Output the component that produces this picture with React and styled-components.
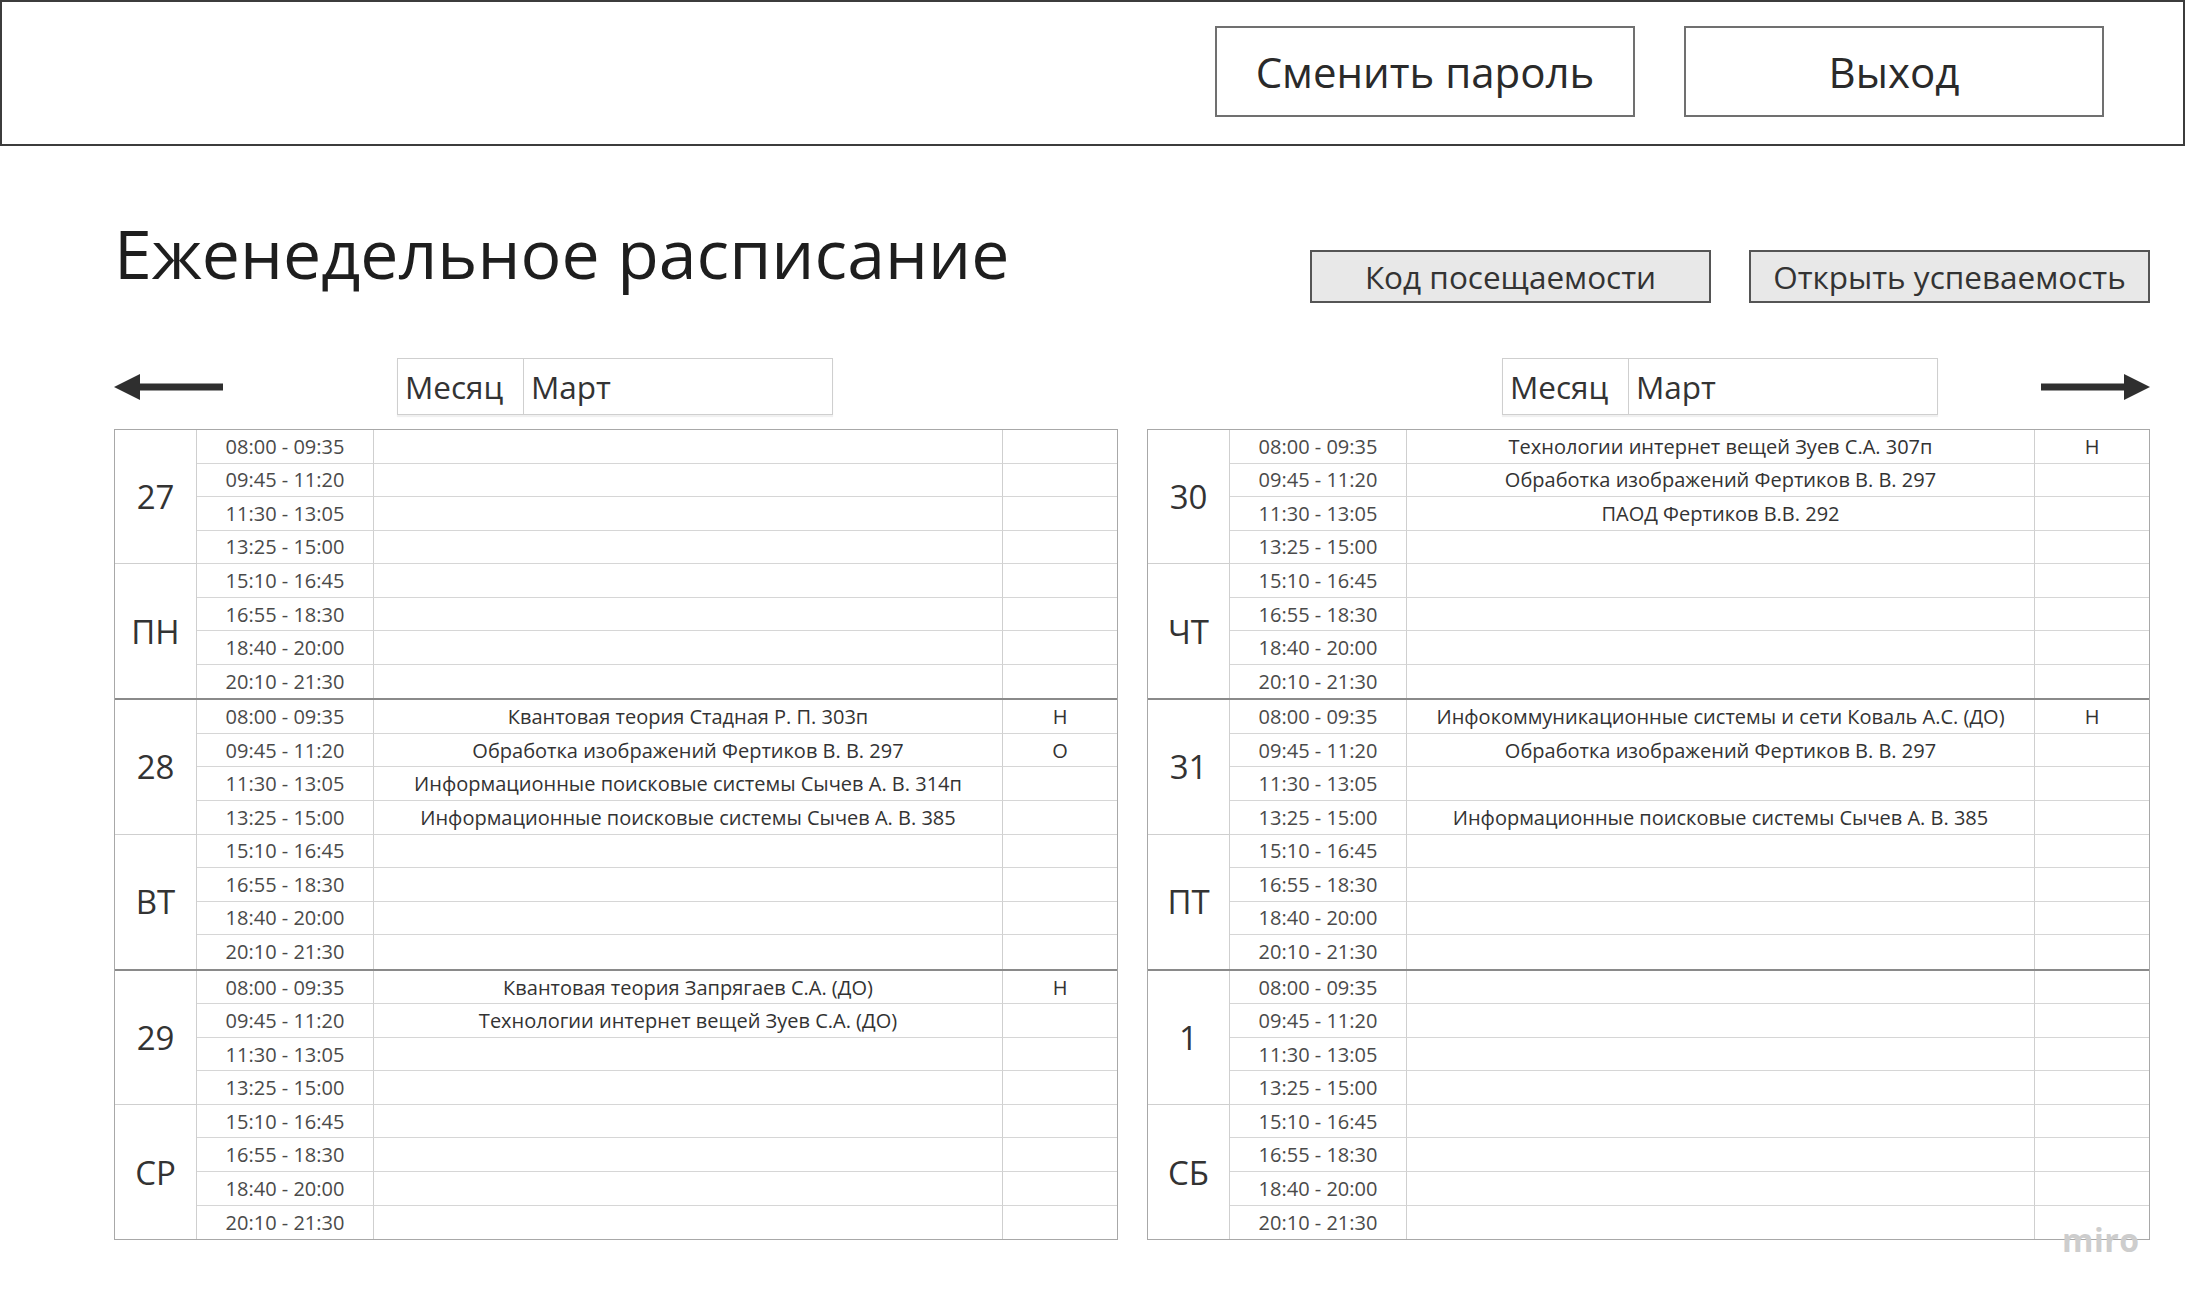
import React from "react";
import styled, { createGlobalStyle } from "styled-components";

const Global = createGlobalStyle`
  html, body { margin: 0; padding: 0; background: #fff; }
  body { font-family: "Open Sans", "Liberation Sans", sans-serif; color: #2a2a2a; }
  * { box-sizing: border-box; }
`;

const Page = styled.div`
  position: relative;
  width: 2185px;
  min-height: 1301px;
  background: #fff;
`;

const Header = styled.header`
  height: 146px;
  border: 2px solid #3c3c3c;
  display: flex;
  justify-content: flex-end;
  align-items: flex-start;
  padding: 24px 79px 0 0;
  gap: 49px;
`;

const HeaderButton = styled.button`
  width: 420px;
  height: 91px;
  background: #fff;
  border: 2px solid #707070;
  font-family: "Open Sans", sans-serif;
  font-size: 42px;
  color: #2a2a2a;
  padding: 0;
  cursor: pointer;
`;

const Main = styled.main`
  padding: 0 35px 0 114px;
`;

const TitleRow = styled.div`
  display: flex;
  align-items: flex-start;
  margin-top: 73px;
`;

const Title = styled.h1`
  margin: 0;
  font-size: 68px;
  line-height: 68px;
  font-weight: 400;
  color: #1e1e1e;
  flex: 1;
`;

const ActionGroup = styled.div`
  display: flex;
  gap: 38px;
  margin-top: 31px;
`;

const ActionButton = styled.button`
  width: 401px;
  height: 53px;
  background: #e8e8e8;
  border: 2px solid #555;
  font-family: "Open Sans", sans-serif;
  font-size: 31.5px;
  color: #333;
  padding: 0;
  line-height: 1;
  cursor: pointer;
`;

const Columns = styled.div`
  display: flex;
  gap: 29px;
  margin-top: 55px;
`;

const Column = styled.section`
  width: ${(p) => p.$w}px;
  display: flex;
  flex-direction: column;
  gap: 14px;
`;

const NavRow = styled.div`
  height: 57px;
  display: flex;
  align-items: center;
`;

const ArrowButton = styled.div`
  width: 109px;
  height: 57px;
  display: flex;
  align-items: center;
  margin-left: ${(p) => (p.$right ? "auto" : "0")};
`;

const MonthBox = styled.div`
  display: flex;
  width: 436px;
  height: 57px;
  margin-left: ${(p) => p.$offset}px;
  border: 1px solid #cfcfcf;
  box-shadow: 0 2px 1px rgba(0, 0, 0, 0.06);
  font-size: 31.5px;
  color: #333;
`;

const MonthLabel = styled.div`
  width: 126px;
  border-right: 1px solid #cfcfcf;
  display: flex;
  align-items: center;
  padding-left: 7px;
`;

const MonthValue = styled.div`
  flex: 1;
  display: flex;
  align-items: center;
  padding-left: 7px;
`;

const Table = styled.div`
  border: 1px solid #a8a8a8;
  display: flex;
  flex-direction: column;
`;

const DayGroup = styled.div`
  display: grid;
  grid-template-columns: 82px 177px 1fr 114px;
  grid-template-rows: repeat(8, 33.55px);
  border-top: ${(p) => (p.$first ? "none" : "2px solid #8a8a8a")};
`;

const DayCell = styled.div`
  grid-column: 1;
  display: flex;
  align-items: center;
  justify-content: center;
  font-size: 33px;
  color: #333;
  border-right: 1px solid #cfcfcf;
  border-bottom: ${(p) => (p.$top ? "1px solid #cfcfcf" : "none")};
`;

const Cell = styled.div`
  display: flex;
  align-items: center;
  justify-content: center;
  font-size: 20px;
  color: ${(p) => (p.$muted ? "#4a4a4a" : "#333")};
  border-right: ${(p) => (p.$last ? "none" : "1px solid #cfcfcf")};
  border-bottom: ${(p) => (p.$bottom ? "none" : "1px solid #d6d6d6")};
  white-space: nowrap;
  overflow: hidden;
`;

const Watermark = styled.div`
  position: absolute;
  left: 2062px;
  top: 1218px;
  font-family: "Open Sans", sans-serif;
  font-weight: 700;
  font-size: 32px;
  color: #cdcdcd;
  letter-spacing: 0.5px;
`;

const TIMES = [
  "08:00 - 09:35",
  "09:45 - 11:20",
  "11:30 - 13:05",
  "13:25 - 15:00",
  "15:10 - 16:45",
  "16:55 - 18:30",
  "18:40 - 20:00",
  "20:10 - 21:30",
];

const LEFT = [
  { date: "27", wd: "ПН", lessons: {} },
  {
    date: "28",
    wd: "ВТ",
    lessons: {
      0: ["Квантовая теория Стадная Р. П. 303п", "Н"],
      1: ["Обработка изображений Фертиков В. В. 297", "О"],
      2: ["Информационные поисковые системы Сычев А. В. 314п", ""],
      3: ["Информационные поисковые системы Сычев А. В. 385", ""],
    },
  },
  {
    date: "29",
    wd: "СР",
    lessons: {
      0: ["Квантовая теория Запрягаев С.А. (ДО)", "Н"],
      1: ["Технологии интернет вещей Зуев С.А. (ДО)", ""],
    },
  },
];

const RIGHT = [
  {
    date: "30",
    wd: "ЧТ",
    lessons: {
      0: ["Технологии интернет вещей Зуев С.А. 307п", "Н"],
      1: ["Обработка изображений Фертиков В. В. 297", ""],
      2: ["ПАОД Фертиков В.В. 292", ""],
    },
  },
  {
    date: "31",
    wd: "ПТ",
    lessons: {
      0: ["Инфокоммуникационные системы и сети Коваль А.С. (ДО)", "Н"],
      1: ["Обработка изображений Фертиков В. В. 297", ""],
      3: ["Информационные поисковые системы Сычев А. В. 385", ""],
    },
  },
  { date: "1", wd: "СБ", lessons: {} },
];

function Arrow({ dir }) {
  const flip = dir === "right";
  return (
    <svg width="109" height="34" viewBox="0 0 109 34">
      <g transform={flip ? "translate(109 0) scale(-1 1)" : undefined}>
        <rect x="14" y="13.5" width="95" height="7" fill="#2f2f2f" />
        <polygon points="0,17 26,4 26,30" fill="#2f2f2f" />
      </g>
    </svg>
  );
}

function Day({ day, first }) {
  return (
    <DayGroup $first={first}>
      <DayCell $top style={{ gridRow: "1 / span 4" }}>{day.date}</DayCell>
      <DayCell style={{ gridRow: "5 / span 4" }}>{day.wd}</DayCell>
      {TIMES.map((t, i) => {
        const l = day.lessons[i] || ["", ""];
        const bottom = i === 7;
        return (
          <React.Fragment key={t}>
            <Cell $muted $bottom={bottom} style={{ gridColumn: 2, gridRow: i + 1 }}>{t}</Cell>
            <Cell $bottom={bottom} style={{ gridColumn: 3, gridRow: i + 1 }}>{l[0]}</Cell>
            <Cell $bottom={bottom} $last style={{ gridColumn: 4, gridRow: i + 1 }}>{l[1]}</Cell>
          </React.Fragment>
        );
      })}
    </DayGroup>
  );
}

function ScheduleTable({ days }) {
  return (
    <Table>
      {days.map((d, i) => (
        <Day key={d.date} day={d} first={i === 0} />
      ))}
    </Table>
  );
}

export default function App() {
  return (
    <Page>
      <Global />
      <Header>
        <HeaderButton>Сменить пароль</HeaderButton>
        <HeaderButton>Выход</HeaderButton>
      </Header>
      <Main>
        <TitleRow>
          <Title>Еженедельное расписание</Title>
          <ActionGroup>
            <ActionButton>Код посещаемости</ActionButton>
            <ActionButton>Открыть успеваемость</ActionButton>
          </ActionGroup>
        </TitleRow>
        <Columns>
          <Column $w={1004}>
            <NavRow>
              <ArrowButton>
                <Arrow dir="left" />
              </ArrowButton>
              <MonthBox $offset={174}>
                <MonthLabel>Месяц</MonthLabel>
                <MonthValue>Март</MonthValue>
              </MonthBox>
            </NavRow>
            <ScheduleTable days={LEFT} />
          </Column>
          <Column $w={1003}>
            <NavRow>
              <MonthBox $offset={355}>
                <MonthLabel>Месяц</MonthLabel>
                <MonthValue>Март</MonthValue>
              </MonthBox>
              <ArrowButton $right>
                <Arrow dir="right" />
              </ArrowButton>
            </NavRow>
            <ScheduleTable days={RIGHT} />
          </Column>
        </Columns>
      </Main>
      <Watermark>miro</Watermark>
    </Page>
  );
}
